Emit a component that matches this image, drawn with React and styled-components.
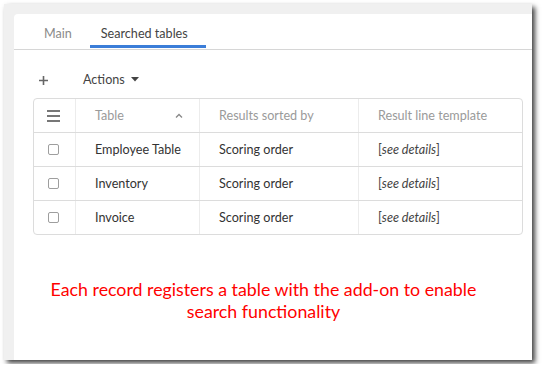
import React from "react";
import styled, { createGlobalStyle } from "styled-components";

const GlobalStyle = createGlobalStyle`
  html, body {
    margin: 0;
    padding: 0;
    background: #ffffff;
  }
  body {
    font-family: Lato, "Open Sans", sans-serif;
  }
`;

const Frame = styled.div`
  margin: 4px;
  width: 528px;
  height: 356px;
  box-sizing: border-box;
  padding: 10px 0 0 10px;
  background: #f0f0f0;
  box-shadow: 3px 3px 5px rgba(0, 0, 0, 0.75);
  display: flex;
`;

const Card = styled.div`
  flex: 1;
  background: #ffffff;
  border-top-left-radius: 4px;
  display: flex;
  flex-direction: column;
`;

const TabBar = styled.div`
  display: flex;
  height: 35px;
  padding-left: 19px;
  border-bottom: 1px solid #d6d6d6;
`;

const Tab = styled.div`
  position: relative;
  padding: 3px 18px 0 11px;
  display: flex;
  align-items: center;
  font-size: 12.6px;
  color: ${(p) => (p.$active ? "#444" : "#8a8a8a")};

  &::after {
    content: "";
    display: ${(p) => (p.$active ? "block" : "none")};
    position: absolute;
    left: 0;
    right: 0;
    bottom: 1px;
    height: 3px;
    background: #3b7dd8;
  }
`;

const Toolbar = styled.div`
  display: flex;
  align-items: center;
  height: 30px;
  margin: 14px 0 4px 24px;
  gap: 35px;
`;

const PlusButton = styled.span`
  display: flex;
  align-items: center;
  padding: 2px 0 0 1px;
`;

const ActionsButton = styled.span`
  display: flex;
  align-items: center;
  gap: 6px;
  font-size: 12.6px;
  color: #444;
`;

const Table = styled.div`
  margin-left: 19px;
  width: 490px;
  border: 1px solid #dcdcdc;
  border-radius: 4px;
  box-sizing: border-box;
`;

const Row = styled.div`
  display: grid;
  grid-template-columns: 41px 124px 159px 1fr;
  height: ${(p) => (p.$first ? "33px" : "34px")};
  border-top: ${(p) => (p.$first ? "none" : "1px solid #dcdcdc")};
  box-sizing: border-box;
`;

const Cell = styled.div`
  display: flex;
  align-items: center;
  justify-content: ${(p) => (p.$center ? "center" : "space-between")};
  padding: ${(p) => (p.$center ? "0 2px 0 0" : "0 16px 0 19px")};
  border-left: ${(p) => (p.$center ? "none" : "1px solid #ececec")};
  font-size: 12.6px;
  color: ${(p) => (p.$head ? "#9a9a9a" : "#333")};
  white-space: nowrap;
`;

const Checkbox = styled.span`
  width: 9px;
  height: 9px;
  border: 1px solid #9e9e9e;
  border-radius: 2px;
  background: #fff;
`;

const Details = styled.span`
  color: #444;
  em {
    font-style: italic;
  }
`;

const Note = styled.div`
  margin-top: 43px;
  padding-right: 19px;
  text-align: center;
  font-size: 17.8px;
  line-height: 22px;
  color: #ff0000;
`;

const rows = ["Employee Table", "Inventory", "Invoice"];

function Hamburger() {
  return (
    <svg width="13" height="12" viewBox="0 0 13 12">
      <rect x="0" y="0" width="13" height="2" fill="#777" />
      <rect x="0" y="5" width="13" height="2" fill="#777" />
      <rect x="0" y="10" width="13" height="2" fill="#777" />
    </svg>
  );
}

export default function App() {
  return (
    <>
      <GlobalStyle />
      <Frame>
        <Card>
          <TabBar>
            <Tab>Main</Tab>
            <Tab $active>Searched tables</Tab>
          </TabBar>
          <Toolbar>
            <PlusButton>
              <svg width="9" height="9" viewBox="0 0 9 9">
                <path d="M4.5 0 V9 M0 4.5 H9" stroke="#666" strokeWidth="1.6" />
              </svg>
            </PlusButton>
            <ActionsButton>
              Actions
              <svg width="8" height="5" viewBox="0 0 8 5">
                <path d="M0 0 H8 L4 4.5 Z" fill="#444" />
              </svg>
            </ActionsButton>
          </Toolbar>
          <Table>
            <Row $first>
              <Cell $center>
                <Hamburger />
              </Cell>
              <Cell $head>
                Table
                <svg width="8" height="5" viewBox="0 0 8 5">
                  <path d="M1 4.5 L4 1.5 L7 4.5" stroke="#888" strokeWidth="1.3" fill="none" />
                </svg>
              </Cell>
              <Cell $head>Results sorted by</Cell>
              <Cell $head>Result line template</Cell>
            </Row>
            {rows.map((name) => (
              <Row key={name}>
                <Cell $center>
                  <Checkbox />
                </Cell>
                <Cell>{name}</Cell>
                <Cell>Scoring order</Cell>
                <Cell>
                  <Details>
                    [<em>see details</em>]
                  </Details>
                </Cell>
              </Row>
            ))}
          </Table>
          <Note>
            Each record registers a table with the add-on to enable
            <br />
            search functionality
          </Note>
        </Card>
      </Frame>
    </>
  );
}
